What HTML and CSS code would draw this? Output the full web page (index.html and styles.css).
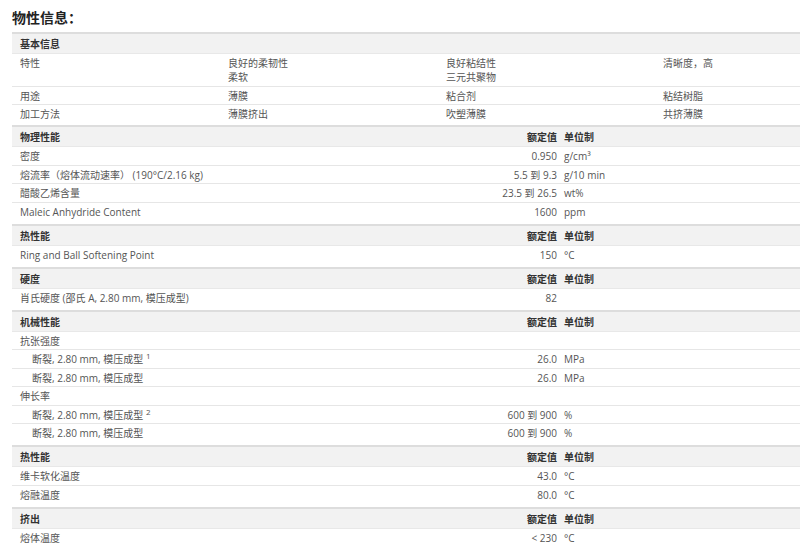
FILE: index.html
```html
<!DOCTYPE html>
<html lang="zh-CN">
<head>
<meta charset="utf-8">
<title>物性信息</title>
<link rel="stylesheet" href="styles.css">
</head>
<body>
<h1 class="title">物性信息：</h1>
<div class="sheet">
  <section class="basic">
    <div class="row head"><div class="cell">基本信息</div></div>
    <div class="row quad">
      <div class="cell">特性</div>
      <div class="cell">良好的柔韧性<br>柔软</div>
      <div class="cell">良好粘结性<br>三元共聚物</div>
      <div class="cell">清晰度，高</div>
    </div>
    <div class="row quad">
      <div class="cell">用途</div>
      <div class="cell">薄膜</div>
      <div class="cell">粘合剂</div>
      <div class="cell">粘结树脂</div>
    </div>
    <div class="row quad last">
      <div class="cell">加工方法</div>
      <div class="cell">薄膜挤出</div>
      <div class="cell">吹塑薄膜</div>
      <div class="cell">共挤薄膜</div>
    </div>
  </section>

  <section class="props">
    <div class="row head"><div class="name">物理性能</div><div class="val">额定值</div><div class="unit">单位制</div></div>
    <div class="row"><div class="name">密度</div><div class="val">0.950</div><div class="unit">g/cm³</div></div>
    <div class="row"><div class="name">熔流率（熔体流动速率） (190°C/2.16 kg)</div><div class="val">5.5 到 9.3</div><div class="unit">g/10 min</div></div>
    <div class="row"><div class="name">醋酸乙烯含量</div><div class="val">23.5 到 26.5</div><div class="unit">wt%</div></div>
    <div class="row last"><div class="name">Maleic Anhydride Content</div><div class="val">1600</div><div class="unit">ppm</div></div>
  </section>

  <section class="props">
    <div class="row head"><div class="name">热性能</div><div class="val">额定值</div><div class="unit">单位制</div></div>
    <div class="row last"><div class="name">Ring and Ball Softening Point</div><div class="val">150</div><div class="unit">°C</div></div>
  </section>

  <section class="props">
    <div class="row head"><div class="name">硬度</div><div class="val">额定值</div><div class="unit">单位制</div></div>
    <div class="row last"><div class="name">肖氏硬度 (邵氏 A, 2.80 mm, 模压成型)</div><div class="val">82</div><div class="unit"></div></div>
  </section>

  <section class="props">
    <div class="row head"><div class="name">机械性能</div><div class="val">额定值</div><div class="unit">单位制</div></div>
    <div class="row"><div class="name">抗张强度</div><div class="val"></div><div class="unit"></div></div>
    <div class="row sub"><div class="name">断裂, 2.80 mm, 模压成型 <sup>1</sup></div><div class="val">26.0</div><div class="unit">MPa</div></div>
    <div class="row sub"><div class="name">断裂, 2.80 mm, 模压成型</div><div class="val">26.0</div><div class="unit">MPa</div></div>
    <div class="row"><div class="name">伸长率</div><div class="val"></div><div class="unit"></div></div>
    <div class="row sub"><div class="name">断裂, 2.80 mm, 模压成型 <sup>2</sup></div><div class="val">600 到 900</div><div class="unit">%</div></div>
    <div class="row sub last"><div class="name">断裂, 2.80 mm, 模压成型</div><div class="val">600 到 900</div><div class="unit">%</div></div>
  </section>

  <section class="props">
    <div class="row head"><div class="name">热性能</div><div class="val">额定值</div><div class="unit">单位制</div></div>
    <div class="row"><div class="name">维卡软化温度</div><div class="val">43.0</div><div class="unit">°C</div></div>
    <div class="row last"><div class="name">熔融温度</div><div class="val">80.0</div><div class="unit">°C</div></div>
  </section>

  <section class="props">
    <div class="row head"><div class="name">挤出</div><div class="val">额定值</div><div class="unit">单位制</div></div>
    <div class="row last"><div class="name">熔体温度</div><div class="val">&lt; 230</div><div class="unit">°C</div></div>
  </section>
</div>
</body>
</html>
```
FILE: styles.css
```css
html, body {
  margin: 0;
  padding: 0;
  background: #ffffff;
}
body {
  padding-left: 12px;
  font-family: "Open Sans", "Noto Sans CJK TC", sans-serif;
  font-size: 10px;
  color: #555555;
  overflow: hidden;
}
.title {
  margin: 0;
  padding-top: 7px;
  height: 25px;
  font-size: 14px;
  line-height: 20px;
  font-weight: bold;
  color: #222222;
  font-family: "Noto Sans CJK TC", sans-serif;
}
.sheet {
  width: 788px;
}
.row {
  display: grid;
  grid-template-columns: 428px 120px 1fr;
  line-height: 14px;
  padding: 2px 0 1.5px;
  border-bottom: 1px solid #e6e6e6;
}
.row.last {
  padding-bottom: 5px;
  border-bottom: none;
}
.basic .row.last {
  padding-bottom: 4px;
}
.row.head {
  background: #f2f2f2;
  border-top: 2px solid #dddddd;
  border-bottom: 1px solid #e8e8e8;
  padding: 3px 0 2px;
  font-weight: bold;
  color: #333333;
}
.basic .row.head {
  grid-template-columns: 1fr;
}
.row.quad {
  grid-template-columns: 208px 218px 217px 1fr;
}
.cell {
  padding-left: 8px;
}
.name {
  padding-left: 8px;
  white-space: nowrap;
}
.sub .name {
  padding-left: 20px;
}
.val {
  text-align: right;
  padding-right: 3px;
  white-space: nowrap;
}
.unit {
  padding-left: 4px;
  white-space: nowrap;
}
sup {
  font-size: 8px;
  line-height: 0;
  vertical-align: 4px;
}
```
